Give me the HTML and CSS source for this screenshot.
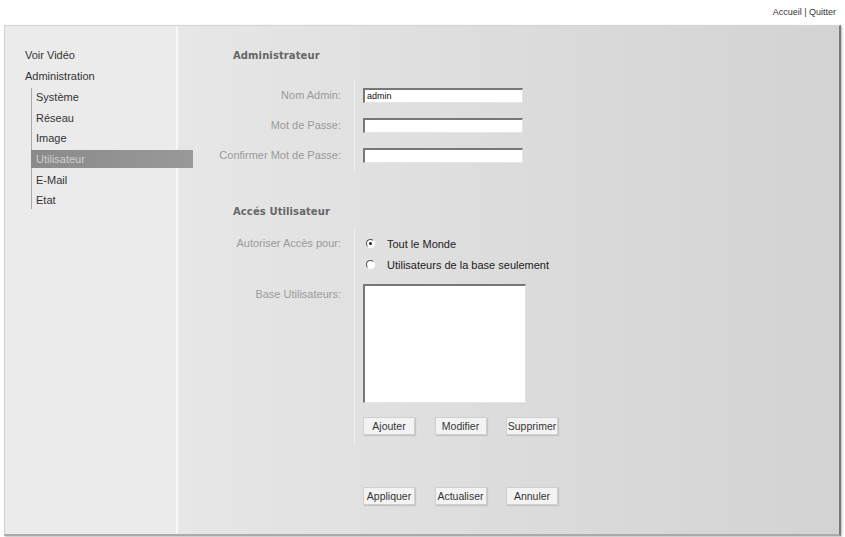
FILE: index.html
```html
<!DOCTYPE html>
<html lang="fr">

<head>
    <meta charset="UTF-8">
    <title>Administration - Utilisateur</title>
    <link rel="stylesheet" href="styles.css">
</head>

<body>
    <div class="topbar">
        <a href="#">Accueil</a> | <a href="#">Quitter</a>
    </div>
    <div class="panel">
        <div class="sidebar">
            <div class="menu__item">Voir Vidéo</div>
            <div class="menu__item">Administration</div>
            <ul class="submenu">
                <li>Système</li>
                <li>Réseau</li>
                <li>Image</li>
                <li class="active">Utilisateur</li>
                <li>E-Mail</li>
                <li>Etat</li>
            </ul>
        </div>
        <div class="main">
            <h3>Administrateur</h3>
            <div class="group">
                <div class="row">
                    <label>Nom Admin:</label>
                    <div class="field"><input type="text" value="admin"></div>
                </div>
                <div class="row">
                    <label>Mot de Passe:</label>
                    <div class="field"><input type="password"></div>
                </div>
                <div class="row">
                    <label>Confirmer Mot de Passe:</label>
                    <div class="field"><input type="password"></div>
                </div>
            </div>

            <h3 class="second">Accés Utilisateur</h3>
            <div class="group">
                <div class="row row--top">
                    <label class="label--radio">Autoriser Accès pour:</label>
                    <div class="field field--radios">
                        <div class="radio"><span class="radio__dot checked"></span>Tout le Monde</div>
                        <div class="radio"><span class="radio__dot"></span>Utilisateurs de la base seulement</div>
                    </div>
                </div>
                <div class="row row--top">
                    <label class="label--list">Base Utilisateurs:</label>
                    <div class="field field--list">
                        <div class="listbox"></div>
                        <div class="buttons">
                            <button>Ajouter</button>
                            <button>Modifier</button>
                            <button>Supprimer</button>
                        </div>
                    </div>
                </div>
            </div>

            <div class="actions">
                <div class="buttons">
                    <button>Appliquer</button>
                    <button>Actualiser</button>
                    <button>Annuler</button>
                </div>
            </div>
        </div>
    </div>
</body>

</html>
```

FILE: styles.css
```css
* {
    margin: 0;
    padding: 0;
    box-sizing: border-box;
}

body {
    background: #fff;
    font-family: 'Liberation Sans', Arial, sans-serif;
    color: #333;
    width: 845px;
    height: 537px;
    overflow: hidden;
}

.topbar {
    height: 25px;
    text-align: right;
    padding: 7px 9px 0 0;
    font-size: 9px;
    line-height: 11px;
    color: #333;
}

.topbar a {
    color: #333;
    text-decoration: none;
}

.panel {
    display: flex;
    margin-left: 4px;
    width: 837px;
    height: 511px;
    border-top: 1px solid #d4d4d4;
    border-left: 1px solid #d0d0d0;
    border-right: 2px solid #777;
    border-bottom: 2px solid #aaa;
    box-shadow: 1px 1px 2px #bbb;
}

.sidebar {
    position: relative;
    z-index: 1;
    width: 173px;
    flex-shrink: 0;
    background: #ebebeb;
    border-right: 2px solid #f6f6f6;
    padding: 19px 0 0 20px;
    font-size: 11px;
}

.menu__item {
    line-height: 21px;
    color: #333;
}

.submenu {
    list-style: none;
    margin: 1px 0 0 6px;
    border-left: 1px solid #aaa;
}

.submenu li {
    line-height: 18px;
    margin-bottom: 2.7px;
    padding-left: 4px;
    color: #333;
}

.submenu li.active {
    margin-left: -1px;
    margin-right: -17px;
    padding-left: 5px;
    background: linear-gradient(90deg, #8a8a8a 0%, #999 100%);
    color: #cfcfcf;
}

.main {
    flex: 1;
    background: linear-gradient(90deg, #e7e7e7 0%, #dcdcdc 50%, #d3d3d3 100%);
    padding-top: 22px;
}

h3 {
    font-family: 'DejaVu Sans', Verdana, sans-serif;
    font-size: 10px;
    font-weight: bold;
    line-height: 16px;
    color: #666;
    padding-left: 55px;
    margin-bottom: 16px;
    letter-spacing: 0.1px;
}

h3.second {
    margin-top: 34px;
    margin-bottom: 9px;
}

.row {
    display: grid;
    grid-template-columns: 176px 1fr;
    height: 30px;
}

.row label {
    text-align: right;
    padding-right: 13px;
    font-size: 11px;
    line-height: 30px;
    color: #9a9a9a;
}

.field {
    border-left: 1px solid #f2f2f2;
    padding-left: 8px;
    display: flex;
    align-items: center;
}

.field input {
    width: 160px;
    height: 15px;
    border-top: 2px solid #777;
    border-left: 2px solid #777;
    border-right: 1px solid #e4e4e4;
    border-bottom: 1px solid #e4e4e4;
    background: #fff;
    font-family: 'Liberation Sans', Arial, sans-serif;
    font-size: 9px;
    padding: 0 2px;
    color: #111;
    outline: none;
}

.row--top {
    height: auto;
}

.row--top .field {
    display: block;
}

.row label.label--radio {
    padding-top: 4px;
    line-height: 21px;
}

.field--radios {
    padding-top: 4px;
}

.radio {
    display: flex;
    align-items: center;
    height: 21px;
    font-size: 11px;
    color: #222;
    padding-left: 3px;
}

.radio__dot {
    position: relative;
    width: 9px;
    height: 9px;
    border-radius: 50%;
    border: 1.5px solid #fff;
    border-top-color: #555;
    border-left-color: #555;
    background: #fff;
    margin-right: 12px;
}

.radio__dot.checked::after {
    content: "";
    position: absolute;
    left: 1.5px;
    top: 1.5px;
    width: 3px;
    height: 3px;
    border-radius: 50%;
    background: #222;
}

.row label.label--list {
    padding-top: 11px;
    line-height: 16px;
}

.field--list {
    padding-top: 9px;
    padding-bottom: 9px;
}

.listbox {
    width: 163px;
    height: 119px;
    background: #fff;
    border-top: 2px solid #777;
    border-left: 2px solid #777;
    border-right: 1px solid #e4e4e4;
    border-bottom: 1px solid #e4e4e4;
}

.buttons {
    display: flex;
    gap: 19.5px;
}

.field--list .buttons {
    margin-top: 14px;
}

.buttons button {
    width: 52px;
    height: 18px;
    background: #f3f3f3;
    border: 1px solid #cfcfcf;
    box-shadow: 1px 1px 1px #c4c4c4;
    font-family: 'Liberation Sans', Arial, sans-serif;
    font-size: 10.5px;
    color: #333;
    white-space: nowrap;
    overflow: visible;
    padding: 0;
    cursor: pointer;
}

.actions {
    margin-top: 43px;
    padding-left: 185px;
}
```
